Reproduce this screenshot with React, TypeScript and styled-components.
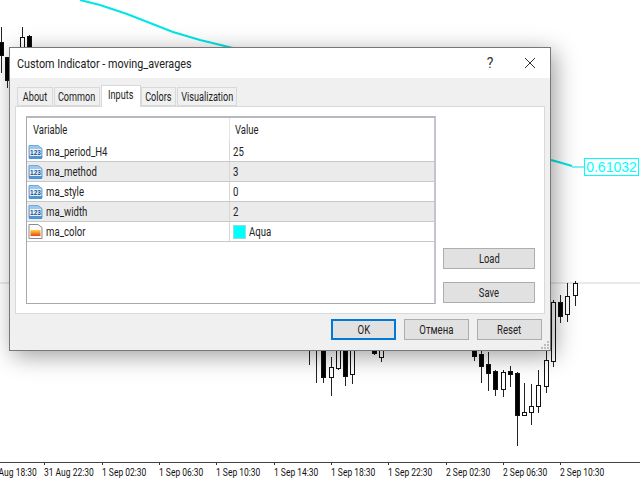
import React from "react";
import styled, { createGlobalStyle } from "styled-components";

const GlobalStyle = createGlobalStyle`
  html, body {
    margin: 0;
    padding: 0;
    background: #fff;
  }
  body {
    font-family: Roboto, "Liberation Sans", Arial, sans-serif;
    font-size: 11px;
    color: #1a1a1a;
  }
`;

// x, wick top, wick bottom, body top, body bottom, filled
type Candle = [number, number, number, number, number, boolean];

const candles: Candle[] = [
  [1, 27, 73, 42, 55, true],
  [7, 57, 88, 57, 80, true],
  [22, 27, 60, 37, 48, false],
  [29, 35, 60, 36, 48, true],
  [309, 340, 365, 340, 345, false],
  [316, 340, 383, 340, 345, false],
  [323, 340, 383, 340, 377, true],
  [331, 357, 396, 367, 377, false],
  [338, 340, 370, 340, 368, false],
  [345, 340, 386, 340, 376, true],
  [352, 340, 384, 340, 374, false],
  [374, 340, 355, 340, 353, true],
  [381, 340, 362, 340, 357, false],
  [474, 340, 361, 340, 356, true],
  [481, 351, 383, 354, 366, true],
  [488, 352, 391, 364, 373, true],
  [495, 370, 396, 371, 389, true],
  [503, 370, 397, 372, 389, false],
  [510, 366, 387, 371, 374, true],
  [517, 372, 446, 373, 415, true],
  [524, 383, 412, 412, 415, false],
  [531, 384, 425, 406, 412, false],
  [538, 370, 413, 385, 406, false],
  [546, 351, 393, 360, 386, false],
  [553, 300, 367, 302, 361, false],
  [560, 295, 323, 302, 316, true],
  [567, 283, 322, 296, 314, false],
  [575, 281, 306, 283, 295, false],
];

const timeLabels = [
  "31 Aug 18:30",
  "31 Aug 22:30",
  "1 Sep 02:30",
  "1 Sep 06:30",
  "1 Sep 10:30",
  "1 Sep 14:30",
  "1 Sep 18:30",
  "1 Sep 22:30",
  "2 Sep 02:30",
  "2 Sep 06:30",
  "2 Sep 10:30",
];

const inputs = [
  { name: "ma_period_H4", value: "25" },
  { name: "ma_method", value: "3" },
  { name: "ma_style", value: "0" },
  { name: "ma_width", value: "2" },
  { name: "ma_color", value: "Aqua", color: "#00ffff" },
];

const tabs = [
  { label: "About", width: 36 },
  { label: "Common", width: 46 },
  { label: "Inputs", width: 40 },
  { label: "Colors", width: 35 },
  { label: "Visualization", width: 60 },
];

const Page = styled.div`
  position: relative;
  width: 640px;
  height: 480px;
  overflow: hidden;
  display: flex;
  flex-direction: column;
  background: #fff;
`;

const ChartArea = styled.div`
  position: relative;
  height: 462px;
  flex: none;
`;

const ChartSvg = styled.svg`
  display: block;
`;

const PriceTag = styled.div`
  position: absolute;
  left: 584px;
  top: 158px;
  width: 53px;
  height: 16px;
  border: 1px solid #00ffff;
  background: #fff;
  color: #00ffff;
  font-family: "Liberation Sans", Arial, sans-serif;
  font-size: 14px;
  line-height: 16px;
  text-align: center;
`;

// the original font is narrower than anything installed, so labels get squeezed
const Squeezed = styled.span<{ $x: number; $origin?: string }>`
  display: inline-block;
  white-space: nowrap;
  transform: scaleX(${(p) => p.$x});
  transform-origin: ${(p) => p.$origin ?? "left"} center;
`;

const TimeAxis = styled.div`
  flex: 1;
  display: flex;
  margin-left: -13px;
  border-top: 1px solid #444;
`;

const TimeLabel = styled.div`
  flex: none;
  width: 57.33px;
  position: relative;
  padding-top: 3px;
  font-size: 11px;
  line-height: 13px;
  color: #111;
  white-space: nowrap;
  &::before {
    content: "";
    position: absolute;
    left: 0;
    top: 0;
    width: 1px;
    height: 2px;
    background: #333;
  }
`;

const Dialog = styled.div`
  position: absolute;
  left: 9px;
  top: 47px;
  width: 540px;
  height: 302px;
  display: flex;
  flex-direction: column;
  background: #f0f0f0;
  border: 1px solid #777;
  box-shadow: 4px 5px 22px rgba(0, 0, 0, 0.38);
`;

const TitleBar = styled.div`
  flex: none;
  height: 30px;
  display: flex;
  align-items: center;
  padding-left: 7px;
  background: #fff;
  color: #222;
`;

const Title = styled.div`
  flex: 1;
  font-size: 13px;
`;

const TitleButton = styled.div`
  width: 40px;
  height: 30px;
  display: flex;
  align-items: center;
  justify-content: center;
  font-size: 14px;
  color: #333;
`;

const TabRow = styled.div`
  flex: none;
  height: 28px;
  display: flex;
  align-items: flex-end;
  padding-left: 7px;
  position: relative;
  z-index: 1;
`;

const Tab = styled.div<{ $active?: boolean; $width: number }>`
  width: ${(p) => p.$width}px;
  height: ${(p) => (p.$active ? 22 : 19)}px;
  margin-right: ${(p) => (p.$active ? 0 : 1)}px;
  margin-bottom: ${(p) => (p.$active ? -1 : 0)}px;
  display: flex;
  justify-content: center;
  align-items: ${(p) => (p.$active ? "flex-start" : "center")};
  padding-top: ${(p) => (p.$active ? 2 : 0)}px;
  box-sizing: border-box;
  border: 1px solid #d9d9d9;
  border-bottom: ${(p) => (p.$active ? "none" : "1px solid #d9d9d9")};
  background: ${(p) => (p.$active ? "#fff" : "#f0f0f0")};
  font-size: 12px;
  color: #222;
`;

const Panel = styled.div`
  flex: none;
  margin: 0 5px;
  height: 208px;
  box-sizing: border-box;
  padding: 9px 9px 9px 10px;
  display: flex;
  gap: 7px;
  background: #fff;
  border: 1px solid #d9d9d9;
`;

const InputsTable = styled.div`
  flex: none;
  width: 410px;
  box-sizing: border-box;
  border: 1px solid #a8a8b0;
  border-top: 2px solid #b8b8c0;
  border-right: 2px solid #c4c4cc;
  background: #fff;
`;

const TableHeader = styled.div`
  height: 24px;
  display: grid;
  grid-template-columns: 202px 1fr;
  align-items: center;
  font-size: 12px;
  color: #222;
`;

const HeaderCell = styled.div`
  height: 100%;
  display: flex;
  align-items: center;
  padding-left: 6px;
  & + & {
    border-left: 1px solid #e4e4e4;
    padding-left: 5px;
  }
`;

const Row = styled.div<{ $shaded: boolean }>`
  height: 20px;
  box-sizing: border-box;
  display: grid;
  grid-template-columns: 202px 1fr;
  align-items: center;
  border-bottom: 1px solid #c8c8c8;
  background: ${(p) => (p.$shaded ? "#ebebeb" : "#fff")};
  font-size: 12px;
  color: #222;
`;

const NameCell = styled.div`
  height: 100%;
  display: flex;
  align-items: center;
  gap: 3px;
  padding-left: 1px;
`;

const ValueCell = styled.div`
  height: 100%;
  display: flex;
  align-items: center;
  gap: 3px;
  padding-left: 3px;
  border-left: 1px solid #d8d8d8;
`;

const Swatch = styled.span<{ $color: string }>`
  width: 11px;
  height: 12px;
  background: ${(p) => p.$color};
  border: 1px solid #9adada;
`;

const SideColumn = styled.div`
  flex: none;
  width: 92px;
  display: flex;
  flex-direction: column;
  justify-content: flex-end;
  gap: 13px;
  padding-bottom: 1px;
`;

const DialogButton = styled.div<{ $primary?: boolean }>`
  height: 21px;
  box-sizing: border-box;
  display: flex;
  align-items: center;
  justify-content: center;
  background: #e1e1e1;
  border: ${(p) => (p.$primary ? "2px solid #0078d7" : "1px solid #adadad")};
  font-size: 12px;
  color: #222;
`;

const Footer = styled.div`
  flex: 1;
  position: relative;
  display: flex;
  justify-content: flex-end;
  gap: 8px;
  padding: 5px 8px 0 0;
`;

const FooterButton = styled(DialogButton)`
  width: 65px;
`;

const Grip = styled.svg`
  position: absolute;
  right: 1px;
  bottom: 1px;
`;

const NumberIcon: React.FC = () => (
  <svg width="15" height="16" viewBox="0 0 15 16">
    <path d="M1 1.5h9l4 3v9.5H1z" fill="#9cc8ee" stroke="#6fa8dc" />
    <rect x="1" y="12" width="13" height="3" fill="#4f95d6" />
    <rect x="2" y="5" width="11" height="7" fill="#eaf3fb" />
    <text x="7.5" y="11" textAnchor="middle" fontSize="6.5" fontWeight="700" fill="#1d4f86" fontFamily="Liberation Sans">
      123
    </text>
  </svg>
);

const ColorIcon: React.FC = () => (
  <svg width="15" height="17" viewBox="0 0 15 17">
    <defs>
      <linearGradient id="heat" x1="0" x2="0" y1="0" y2="1">
        <stop offset="0" stopColor="#ffd23a" />
        <stop offset="1" stopColor="#e8481c" />
      </linearGradient>
    </defs>
    <path d="M1 1.5h9l4 3v11H1z" fill="#fafafa" stroke="#8c8c8c" />
    <rect x="2.5" y="7" width="10" height="6" fill="url(#heat)" />
  </svg>
);

const App: React.FC = () => {
  return (
    <Page>
      <GlobalStyle />
      <ChartArea>
        <ChartSvg width="640" height="462">
          <line x1="0" x2="640" y1="283" y2="283" stroke="#d4d4d4" />
          {candles.map(([x, wickTop, wickBottom, bodyTop, bodyBottom, filled]) => (
            <g key={x}>
              <line x1={x + 0.5} x2={x + 0.5} y1={wickTop} y2={wickBottom} stroke="#222" />
              <rect
                x={x - 1.5}
                y={bodyTop + 0.5}
                width="4"
                height={bodyBottom - bodyTop}
                fill={filled ? "#000" : "#fff"}
                stroke="#111"
              />
            </g>
          ))}
          <polyline
            points="80,0 100,5 127,14 150,23 173,32 200,40 233,48"
            fill="none"
            stroke="#00e6e6"
            strokeWidth="2"
          />
          <polyline points="551,160 562,163 572,166" fill="none" stroke="#00e6e6" strokeWidth="2" />
          <line x1="572" x2="584" y1="167" y2="167" stroke="#00e6e6" />
        </ChartSvg>
        <PriceTag>0.61032</PriceTag>
        <Dialog>
          <TitleBar>
            <Title>
              <Squeezed $x={0.83}>Custom Indicator - moving_averages</Squeezed>
            </Title>
            <TitleButton>?</TitleButton>
            <TitleButton>
              <svg width="12" height="12" viewBox="0 0 12 12">
                <path d="M1 1l10 10M11 1L1 11" stroke="#333" strokeWidth="1" fill="none" />
              </svg>
            </TitleButton>
          </TitleBar>
          <TabRow>
            {tabs.map((tab) => (
              <Tab key={tab.label} $width={tab.width} $active={tab.label === "Inputs"}>
                <Squeezed $x={0.76} $origin="center">
                  {tab.label}
                </Squeezed>
              </Tab>
            ))}
          </TabRow>
          <Panel>
            <InputsTable>
              <TableHeader>
                <HeaderCell>
                  <Squeezed $x={0.79}>Variable</Squeezed>
                </HeaderCell>
                <HeaderCell>
                  <Squeezed $x={0.79}>Value</Squeezed>
                </HeaderCell>
              </TableHeader>
              {inputs.map((item, index) => (
                <Row key={item.name} $shaded={index % 2 === 1}>
                  <NameCell>
                    {item.color ? <ColorIcon /> : <NumberIcon />}
                    <Squeezed $x={0.8}>{item.name}</Squeezed>
                  </NameCell>
                  <ValueCell>
                    {item.color && <Swatch $color={item.color} />}
                    <Squeezed $x={0.8}>{item.value}</Squeezed>
                  </ValueCell>
                </Row>
              ))}
            </InputsTable>
            <SideColumn>
              <DialogButton>
                <Squeezed $x={0.78} $origin="center">Load</Squeezed>
              </DialogButton>
              <DialogButton>
                <Squeezed $x={0.78} $origin="center">Save</Squeezed>
              </DialogButton>
            </SideColumn>
          </Panel>
          <Footer>
            <FooterButton $primary>
              <Squeezed $x={0.8} $origin="center">OK</Squeezed>
            </FooterButton>
            <FooterButton>
              <Squeezed $x={0.8} $origin="center">Отмена</Squeezed>
            </FooterButton>
            <FooterButton>
              <Squeezed $x={0.8} $origin="center">Reset</Squeezed>
            </FooterButton>
            <Grip width="8" height="8" viewBox="0 0 8 8" fill="#bdbdbd">
              <rect x="6" y="0" width="2" height="2" />
              <rect x="3" y="3" width="2" height="2" />
              <rect x="6" y="3" width="2" height="2" />
              <rect x="0" y="6" width="2" height="2" />
              <rect x="3" y="6" width="2" height="2" />
              <rect x="6" y="6" width="2" height="2" />
            </Grip>
          </Footer>
        </Dialog>
      </ChartArea>
      <TimeAxis>
        {timeLabels.map((label) => (
          <TimeLabel key={label}>
            <Squeezed $x={0.77}>{label}</Squeezed>
          </TimeLabel>
        ))}
      </TimeAxis>
    </Page>
  );
};

export default App;
